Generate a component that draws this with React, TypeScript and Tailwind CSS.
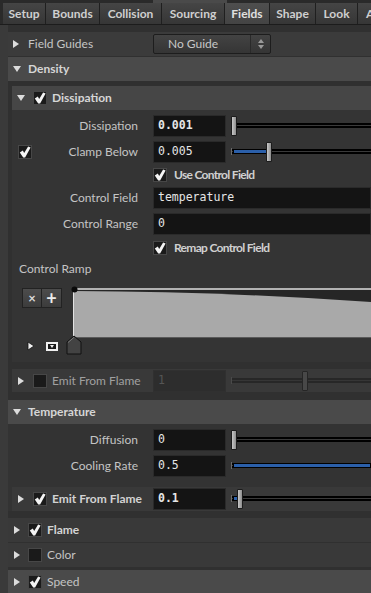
import React from 'react';

const sans = "font-['Lato','Liberation_Sans',sans-serif]";
const mono = "font-['DejaVu_Sans_Mono','Liberation_Mono',monospace]";

const TriRight = ({ dim }: { dim?: boolean }) => (
  <svg width="6" height="8" viewBox="0 0 6 8" className="shrink-0">
    <path d="M0 0 L6 4 L0 8 Z" fill={dim ? '#bdbdbd' : '#dcdcdc'} />
  </svg>
);

const TriDown = () => (
  <svg width="8" height="6" viewBox="0 0 8 6" className="shrink-0">
    <path d="M0 0 L8 0 L4 6 Z" fill="#dcdcdc" />
  </svg>
);

const Check = ({ on }: { on?: boolean }) => (
  <div className="flex h-[14px] w-[14px] shrink-0 items-center justify-center border border-[#474747] bg-[#1a1a1a]">
    {on && (
      <svg width="12" height="12" viewBox="0 0 12 12">
        <path d="M0.8 6.4 L3.8 4.6 L5.2 7 L9.1 0.4 L11.6 1.4 L6.1 11.6 L4.2 11.6 Z" fill="#f4f4f4" />
      </svg>
    )}
  </div>
);

const tabs = [
  { name: 'Setup', w: 'w-[43px]' },
  { name: 'Bounds', w: 'w-[54px]' },
  { name: 'Collision', w: 'w-[62px]' },
  { name: 'Sourcing', w: 'w-[63px]' },
  { name: 'Fields', w: 'w-[45px]', active: true },
  { name: 'Shape', w: 'w-[46px]' },
  { name: 'Look', w: 'w-[42px]' },
  { name: 'Advanced', w: 'w-[70px]' },
];

function Field({ value, bold, off, grow }: { value: string; bold?: boolean; off?: boolean; grow?: boolean }) {
  return (
    <div
      className={`flex h-[22px] shrink-0 items-center border pl-[4px] ${mono} text-[11.5px] ${
        grow ? 'flex-1' : 'w-[73px]'
      } ${off ? 'border-[#303030] bg-[#2d2d2d] text-[#555]' : 'border-[#2a2a2a] bg-[#141414] text-[#e6e6e6]'} ${
        bold ? 'font-bold' : ''
      }`}
    >
      {value}
    </div>
  );
}

type SliderKind = 'min' | 'clamp' | 'full' | 'small' | 'off';

const Handle = ({ cls, off }: { cls: string; off?: boolean }) => (
  <div
    className={`absolute top-[1px] h-[20px] w-[6px] rounded-[1px] border ${cls} ${
      off ? 'border-[#262626] bg-[#484848]' : 'border-[#1c1c1c] bg-linear-to-r from-[#c8c8c8] to-[#8e8e8e]'
    }`}
  />
);

function Slider({ kind }: { kind: SliderKind }) {
  const off = kind === 'off';
  return (
    <div className="relative ml-[5px] h-[22px] flex-1">
      <div
        className={`absolute left-0 right-0 top-[8px] h-[5px] border-y-2 ${
          off ? 'border-[#272727] bg-[#363636]' : 'border-black bg-[#3a3a3a]'
        }`}
      />
      {kind !== 'min' && (
        <div className={`absolute left-0 top-[7px] h-[7px] w-[2px] border-l ${off ? 'border-[#4a4a4a]' : 'border-[#6a6a6a]'}`} />
      )}
      {kind === 'clamp' && <div className="absolute left-[2px] top-[8px] h-[5px] w-[34px] border border-black bg-[#2b5fa9]" />}
      {kind === 'full' && <div className="absolute left-[2px] right-0 top-[8px] h-[5px] border border-black bg-[#2b5fa9]" />}
      {kind === 'small' && <div className="absolute left-[2px] top-[8px] h-[5px] w-[5px] border border-black bg-[#2b5fa9]" />}
      {kind === 'min' && <Handle cls="left-0" />}
      {kind === 'clamp' && <Handle cls="left-[35px]" />}
      {kind === 'small' && <Handle cls="left-[6px]" />}
      {kind === 'off' && <Handle cls="left-[71px]" off />}
    </div>
  );
}

function ParmRow({
  labelW,
  label,
  value,
  bold,
  slider,
  toggle,
  grow,
}: {
  labelW: string;
  label: string;
  value: string;
  bold?: boolean;
  slider?: SliderKind;
  toggle?: boolean;
  grow?: boolean;
}) {
  return (
    <div className="flex h-[22px] items-center">
      <div className={`flex shrink-0 items-center ${labelW}`}>
        {toggle && (
          <div className="pl-[6px]">
            <Check on />
          </div>
        )}
        <span className="ml-auto text-[#c4c4c4]">{label}</span>
      </div>
      <div className="ml-[15px] flex flex-1 items-center">
        <Field value={value} bold={bold} grow={grow} />
        {slider && <Slider kind={slider} />}
      </div>
    </div>
  );
}

const ToggleRow = ({ label, cls }: { label: string; cls: string }) => (
  <div className={`flex h-[23px] items-center pl-[141px] ${cls}`}>
    <Check on />
    <span className="ml-[7px] font-bold tracking-[-0.7px] text-[#d0d0d0]">{label}</span>
  </div>
);

function SubFolderRow({
  label,
  on,
  off,
  value,
  slider,
  h,
}: {
  label: string;
  on?: boolean;
  off?: boolean;
  value: string;
  slider: SliderKind;
  h: string;
}) {
  return (
    <div className={`flex items-center bg-[#393939] ${h}`}>
      <div className="flex w-[141px] shrink-0 items-center pl-[6px]">
        <TriRight />
        <div className="ml-[9px]">
          <Check on={on} />
        </div>
        <span className={`ml-[5px] whitespace-nowrap ${on ? 'font-bold text-[#d2d2d2]' : 'text-[#a0a0a0]'}`}>{label}</span>
      </div>
      <Field value={value} bold={on} off={off} />
      <Slider kind={slider} />
    </div>
  );
}

function FolderRow({ label, on, bold, hover, cls }: { label: string; on?: boolean; bold?: boolean; hover?: boolean; cls: string }) {
  return (
    <div className={`flex h-[24px] items-center pl-[6px] ${hover ? 'bg-[#4a4a4a]' : 'bg-[#393939]'} ${cls}`}>
      <TriRight />
      <div className="ml-[8px]">
        <Check on={on} />
      </div>
      <span className={`ml-[5px] ${bold ? 'font-bold text-[#d4d4d4]' : 'text-[#c4c4c4]'}`}>{label}</span>
    </div>
  );
}

function Ramp() {
  return (
    <>
      <div className="mt-[10px] flex">
        <div className="w-[61px] shrink-0 pl-[10px]">
          <div className="flex h-[20px] w-[40px]">
            <div className="flex w-[20px] items-center justify-center border border-[#222] bg-linear-to-b from-[#4c4c4c] to-[#3c3c3c] text-[13px] font-bold leading-none text-[#dadada]">
              ×
            </div>
            <div className="flex w-[20px] items-center justify-center border border-l-0 border-[#222] bg-linear-to-b from-[#4c4c4c] to-[#3c3c3c] text-[18px] font-bold leading-none text-[#ececec]">
              +
            </div>
          </div>
        </div>
        <svg width="298" height="50" viewBox="0 0 298 50" className="overflow-visible">
          <rect x="0" y="0" width="298" height="50" fill="#262626" />
          <path d="M1 3 Q149 3.5 298 14 L298 49 L1 49 Z" fill="#a9a9a9" />
          <line x1="0" y1="1" x2="298" y2="1" stroke="#e2e2e2" strokeWidth="1.5" />
          <line x1="0.5" y1="0" x2="0.5" y2="50" stroke="#e2e2e2" strokeWidth="1" />
          <line x1="0" y1="49.5" x2="298" y2="49.5" stroke="#5a5a5a" strokeWidth="1" />
          <circle cx="1.5" cy="1.5" r="3" fill="#0a0a0a" />
        </svg>
      </div>
      <div className="flex h-[18px] items-start">
        <svg width="8" height="10" viewBox="0 0 8 10" className="ml-[15px] mt-[3px]">
          <path d="M1 1 L7 5 L1 9 Z" fill="#f0f0f0" stroke="#111" strokeWidth="0.8" />
        </svg>
        <svg width="12" height="9" viewBox="0 0 12 9" className="ml-[11px] mt-[4px]">
          <rect x="0" y="0" width="12" height="9" fill="#f0f0f0" />
          <rect x="2" y="2" width="8" height="5" fill="#1a1a1a" />
          <path d="M4 3 L8 3 L6 6 Z" fill="#f0f0f0" />
        </svg>
        <svg width="16" height="20" viewBox="0 0 16 20" className="-mt-[3px] ml-[8px]">
          <path d="M1 7 L8 1 L15 7 L15 19 L1 19 Z" fill="#434343" stroke="#101010" strokeWidth="1" />
          <path d="M2 7.5 L8 2.3" stroke="#8a8a8a" strokeWidth="0.8" fill="none" />
        </svg>
      </div>
    </>
  );
}

export default function App() {
  return (
    <div className={`h-[593px] w-[371px] overflow-hidden bg-[#2a2a2a] ${sans} text-[12px] text-[#c6c6c6]`}>
      <div className="flex h-[3px]">
        <div className="ml-[153px] w-[74px] bg-[#4a4a4a]" />
      </div>
      <div className="flex h-[22px] overflow-hidden border-b border-[#1c1c1c] pl-[3px]">
        {tabs.map((t) => (
          <div
            key={t.name}
            className={`flex shrink-0 items-center justify-center border-r border-[#1f1f1f] font-bold ${t.w} ${
              t.active
                ? 'bg-linear-to-b from-[#4e4e4e] to-[#444] text-[#e0e0e0]'
                : 'bg-linear-to-b from-[#454545] to-[#363636] text-[#cfcfcf]'
            }`}
          >
            {t.name}
          </div>
        ))}
      </div>

      <div className="flex h-[568px]">
        <div className="w-[8px] shrink-0 bg-[#3a3a3a]" />
        <div className="min-w-0 flex-1 bg-[#303030] pt-[7px]">
          {/* Field guides */}
          <div className="flex h-[24px] items-center bg-[#3b3b3b]">
            <div className="flex w-[145px] shrink-0 items-center pl-[5px]">
              <TriRight />
              <span className="ml-[9px]">Field Guides</span>
            </div>
            <div className="flex h-[20px] w-[118px] items-center rounded-[2px] border border-[#1d1d1d] bg-linear-to-b from-[#434343] to-[#353535]">
              <span className="flex-1 pl-[14px] text-[#c8c8c8]">No Guide</span>
              <div className="flex h-full w-[20px] flex-col items-center justify-center gap-[2px] border-l border-[#2a2a2a]">
                <svg width="6" height="4" viewBox="0 0 6 4">
                  <path d="M0 4 L3 0 L6 4 Z" fill="#9a9a9a" />
                </svg>
                <svg width="6" height="4" viewBox="0 0 6 4">
                  <path d="M0 0 L6 0 L3 4 Z" fill="#9a9a9a" />
                </svg>
              </div>
            </div>
          </div>

          {/* Density */}
          <div className="mt-[1px] flex h-[24px] items-center bg-[#4a4a4a] pl-[5px]">
            <TriDown />
            <span className="ml-[7px] font-bold text-[#d6d6d6]">Density</span>
          </div>
          <div className="pl-[4px] pt-[5px]">
            <div className="flex h-[24px] items-center bg-[#464646] pl-[5px]">
              <TriDown />
              <div className="ml-[8px]">
                <Check on />
              </div>
              <span className="ml-[5px] font-bold text-[#d6d6d6]">Dissipation</span>
            </div>
            <div className="bg-[#343434] pb-[6px] pt-[5px]">
              <ParmRow labelW="w-[126px]" label="Dissipation" value="0.001" bold slider="min" />
              <div className="mt-[4px]">
                <ParmRow labelW="w-[126px]" label="Clamp Below" value="0.005" slider="clamp" toggle />
              </div>
              <ToggleRow label="Use Control Field" cls="" />
              <div className="mt-[1px]">
                <ParmRow labelW="w-[126px]" label="Control Field" value="temperature" grow />
              </div>
              <div className="mt-[4px]">
                <ParmRow labelW="w-[126px]" label="Control Range" value="0" grow />
              </div>
              <ToggleRow label="Remap Control Field" cls="mt-[1px]" />
              <div className="mt-[1px] flex h-[18px] items-center pl-[7px] text-[#c4c4c4]">Control Ramp</div>
              <Ramp />
            </div>
            <div className="mt-[7px]">
              <SubFolderRow label="Emit From Flame" off value="1" slider="off" h="h-[23px]" />
            </div>
          </div>

          {/* Temperature */}
          <div className="mt-[8px] flex h-[24px] items-center bg-[#4a4a4a] pl-[5px]">
            <TriDown />
            <span className="ml-[7px] font-bold text-[#d6d6d6]">Temperature</span>
          </div>
          <div className="bg-[#333] pt-[5px]">
            <ParmRow labelW="w-[130px]" label="Diffusion" value="0" slider="min" />
            <div className="mt-[4px]">
              <ParmRow labelW="w-[130px]" label="Cooling Rate" value="0.5" slider="full" />
            </div>
            <div className="ml-[4px] mt-[10px]">
              <SubFolderRow label="Emit From Flame" on value="0.1" slider="small" h="h-[24px]" />
            </div>
          </div>

          <FolderRow label="Flame" on bold cls="mt-[7px]" />
          <FolderRow label="Color" cls="mt-[1px]" />
          <FolderRow label="Speed" on hover cls="mt-[3px]" />
        </div>
      </div>
    </div>
  );
}
